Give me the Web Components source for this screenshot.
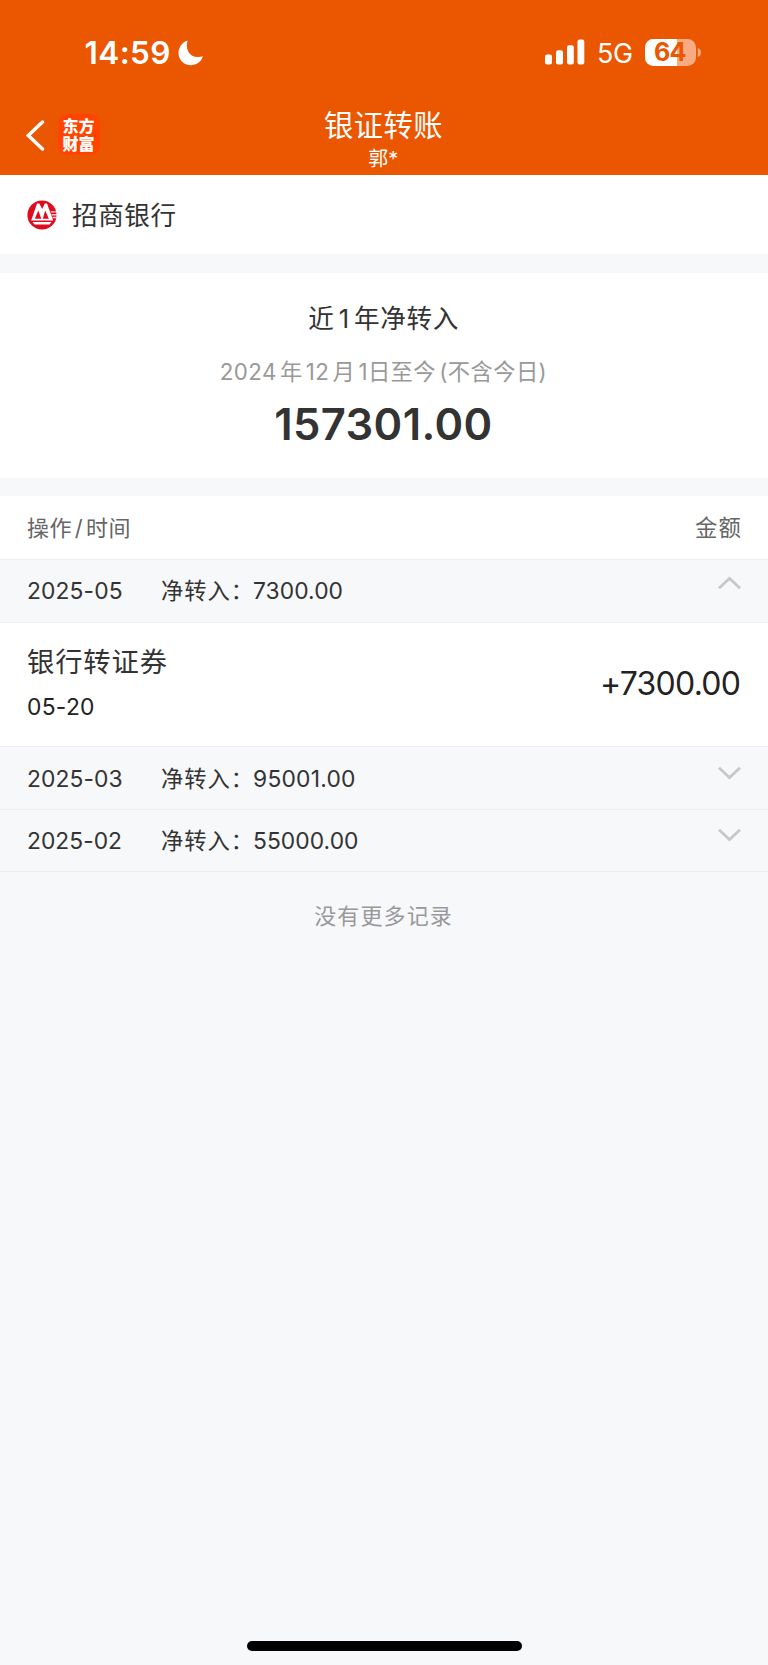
<!DOCTYPE html>
<html lang="zh-CN">
<head>
<meta charset="utf-8">
<title>银证转账</title>
<style>
html,body{margin:0;padding:0;background:#f7f8fa}
body{font-family:Inter,"Noto Sans CJK SC",sans-serif;color:#333}
</style>
</head>
<body>
<transfer-page></transfer-page>
<script>
const define = (name, html, init) => customElements.define(name, class extends HTMLElement {
  constructor() {
    super();
    const t = document.createElement('template');
    t.innerHTML = html;
    this.attachShadow({mode: 'open'}).append(t.content.cloneNode(true));
  }
  connectedCallback() { if (init) init(this, this.shadowRoot); }
});

/* A one-line label tracked to a given width: size, weight, line and width are in px. */
define('track-label', `<style>
:host{display:block;white-space:nowrap;flex:none}
span{display:inline-block;white-space:pre}
</style><span><slot></slot></span>`, (el, root) => {
  const s = root.querySelector('span');
  const a = n => el.getAttribute(n);
  el.style.fontSize = a('size') + 'px';
  el.style.lineHeight = a('line') + 'px';
  el.style.height = a('line') + 'px';
  if (a('weight')) el.style.fontWeight = a('weight');
  if (a('word')) el.style.wordSpacing = a('word') + 'px';
  const n = el.textContent.length;
  const gap = (Number(a('width')) - s.getBoundingClientRect().width) / (n - 1);
  s.style.letterSpacing = gap + 'px';
  s.style.marginRight = -gap + 'px';
});

define('status-bar', `<style>
:host{display:flex;height:103px;box-sizing:border-box;padding:33px 67px 0 84.500px;justify-content:space-between}
div{display:flex;height:39px;align-items:center}
.moon{margin:0 0 0 7.500px}
.bars{margin-right:12px;margin-top:-1px}
.bat{margin-left:12px;display:flex;position:relative;width:56px;height:27px;margin-top:-1px}
.bat svg{position:absolute;left:0;top:0}
.bat track-label{position:absolute;left:9px;top:0;color:#eb5600}
.net{margin-top:1.500px}
</style>
<div><track-label size="31.500" line="39" weight="600" width="86">14:59</track-label>
<svg class="moon" width="26" height="26" viewBox="0 0 26 26"><path fill="#fff" d="M9.6.4C6.6 10.500 12.500 19.500 25 16.300C23.200 21.600 18.500 25.300 12.800 25.300C6 25.300.5 19.800.5 13C.5 7.200 4.200 2 9.600.4Z"/></svg></div>
<div><svg class="bars" width="40" height="26" viewBox="0 0 40 26" fill="#fff"><rect x="0" y="15.500" width="7" height="10" rx="2"/><rect x="11" y="11.300" width="7" height="14.200" rx="2"/><rect x="22" y="6.200" width="6.800" height="19.300" rx="2"/><rect x="32.500" y="0.500" width="6.800" height="25" rx="2"/></svg>
<track-label class="net" size="26.800" line="40" weight="400" width="36">5G</track-label>
<span class="bat"><svg width="57" height="27" viewBox="0 0 57 27"><rect width="51" height="27" rx="8.500" fill="#f7ab80"/><path fill="#fff" d="M8.500 0H32V27H8.500A8.500 8.500 0 0 1 0 18.500V8.500A8.500 8.500 0 0 1 8.500 0Z"/><path fill="#f7ab80" d="M52.800 9C57 10.200 57 16.800 52.800 18Z"/></svg><track-label size="25" line="27" weight="700" width="32.500">64</track-label></span></div>`);

define('app-logo', `<style>
:host{display:flex;flex-direction:column;align-items:center;justify-content:center;width:42px;height:41px;border-radius:9px;background:#ff4400;color:#fff}
</style><track-label size="16" line="18" weight="900" width="32">东方</track-label><track-label size="16" line="18" weight="900" width="32">财富</track-label>`);

define('nav-bar', `<style>
:host{display:grid;grid-template-columns:1fr auto 1fr;height:71px}
.left{display:flex;align-items:flex-start;padding:11px 0 0 25.500px}
.left svg{margin:6px 13px 0 0}
.mid{display:flex;flex-direction:column;align-items:center;padding:1px 1.500px 0 0}
</style>
<div class="left"><svg width="19" height="31" viewBox="0 0 19 31"><path d="M16.500 2 2.300 15.500 16.500 29" fill="none" stroke="#fff" stroke-width="3.400" stroke-linecap="round" stroke-linejoin="miter"/></svg><app-logo></app-logo></div>
<div class="mid"><track-label size="29.300" line="44" width="118.500">银证转账</track-label><track-label size="20" line="23" width="30">郭*</track-label></div><div></div>`);

define('bank-row', `<style>
:host{display:flex;align-items:center;height:79px;background:#fff;padding-left:27px}
svg{margin-right:15px}
track-label{padding-top:2px}
</style>
<svg width="30" height="30" viewBox="0 0 30 30"><circle cx="15" cy="15" r="14.600" fill="#e10b20"/><path fill="#fff" fill-rule="evenodd" d="M10 3.500H12.300L15.200 9 17.800 3.500H20L26.200 20.500H4.200ZM11.300 10.500 7.800 18.800H14.300ZM18.200 10.500 15.800 18.800H21.800Z"/><path fill="#fff" d="M5.500 22H24.500L22.500 24.400H7.500Z"/><path fill="#fff" opacity=".8" d="M23.500 11.200H30V12.600H24ZM24.200 14H30V15.400H24.800ZM25.200 16.800H30V18.200H25.800Z"/></svg>
<track-label size="25.600" line="40" width="104">招商银行</track-label>`);

define('net-summary', `<style>
:host{display:flex;flex-direction:column;align-items:center;height:205.500px;box-sizing:border-box;padding:26px 1.500px 0 0;margin:18.500px 0 18px;background:#fff}
.date{color:#999;margin-top:13.500px}
.sum{margin-top:5px}
</style>
<track-label size="25.600" line="40" width="150" word="-3.500">近 1 年净转入</track-label>
<track-label class="date" size="22.300" line="40" width="327" word="-3.500">2024 年 12 月 1日至今 (不含今日)</track-label>
<track-label class="sum" size="43.500" line="54" weight="600" width="218">157301.00</track-label>`);

define('list-head', `<style>
:host{display:flex;justify-content:space-between;align-items:center;height:63px;background:#fff;padding:0 27px;color:#666}
</style><track-label size="22" line="40" width="103.500" word="-4">操作 / 时间</track-label><track-label size="22.400" line="40" width="46">金额</track-label>`);

/* Month header: date, net amount and a fold arrow. */
define('month-row', `<style>
:host{display:flex;align-items:center;height:62.500px;box-sizing:border-box;border-top:1px solid #eceef1;padding:0 27px}
:host(:not([open])){padding-top:1.500px}
:host([last]){border-bottom:1px solid #eceef1;height:63px}
.d{width:134px}
svg{margin:0 0 12px auto}
:host([open]) svg{transform:scaleY(-1);margin-bottom:16.500px}
</style><div class="d"><slot name="month"></slot></div><slot name="cap"></slot><slot name="amount"></slot>
<svg width="24" height="14" viewBox="0 0 24 14"><path d="M2 1.800 12.500 11.500 23 1.800" fill="none" stroke="#c8c8c8" stroke-width="2.800"/></svg>`);

define('transfer-item', `<style>
:host{display:flex;justify-content:space-between;height:124.500px;box-sizing:border-box;border-top:1px solid #eceef1;background:#fff;padding:0 27px}
.l{padding-top:20.500px}
.l .t{margin-top:4px;color:#222}
.amt{margin-top:41px;color:#222}
</style><div class="l"><track-label size="27.300" line="40" width="140">银行转证券</track-label><track-label class="t" size="22.800" line="40" width="67.500">05-20</track-label></div>
<track-label class="amt" size="32" line="40" width="141">+7300.00</track-label>`);

define('home-bar', `<style>
:host{display:block;width:275px;height:9.500px;border-radius:5px;background:#000;margin:auto auto 14.500px 246.500px}
</style>`);

define('transfer-page', `<style>
:host{display:flex;flex-direction:column;width:768px;height:1665px;background:#f7f8fa;overflow:hidden}
header{background:#eb5600;color:#fff;height:174.500px;margin-bottom:.5px}
.none{align-self:center;color:#999;margin:24.500px 2px 0 0}
</style>
<header><status-bar></status-bar><nav-bar></nav-bar></header>
<bank-row></bank-row>
<net-summary></net-summary>
<list-head></list-head>
<month-row open><track-label slot="month" size="22.800" line="40" width="95.500">2025-05</track-label><track-label slot="cap" size="22.300" line="40" width="92">净转入：</track-label><track-label slot="amount" size="22.800" line="40" width="90">7300.00</track-label></month-row>
<transfer-item></transfer-item>
<month-row><track-label slot="month" size="22.800" line="40" width="95.500">2025-03</track-label><track-label slot="cap" size="22.300" line="40" width="92">净转入：</track-label><track-label slot="amount" size="22.800" line="40" width="102.500">95001.00</track-label></month-row>
<month-row last><track-label slot="month" size="22.800" line="40" width="95">2025-02</track-label><track-label slot="cap" size="22.300" line="40" width="92">净转入：</track-label><track-label slot="amount" size="22.800" line="40" width="105.500">55000.00</track-label></month-row>
<track-label class="none" size="22" line="40" width="137.500">没有更多记录</track-label>
<home-bar></home-bar>`);
</script>
</body>
</html>
